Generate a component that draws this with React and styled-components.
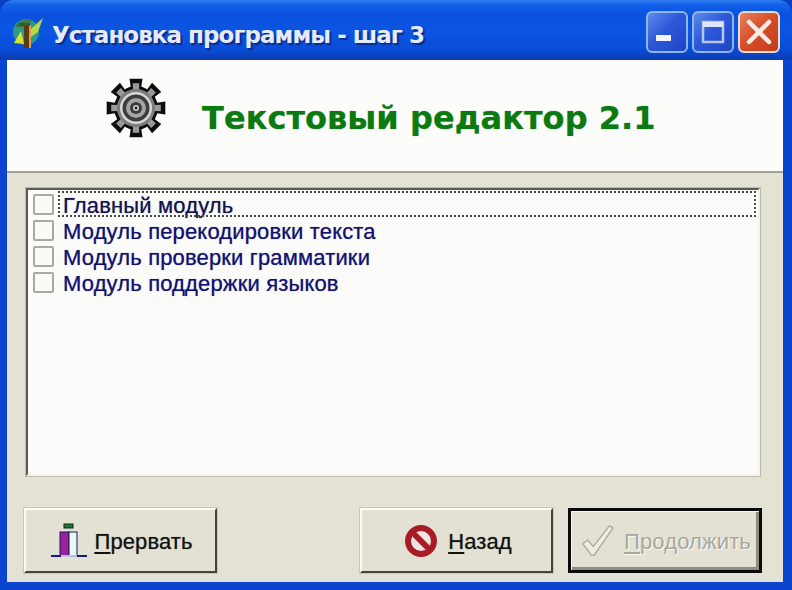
import styled, { createGlobalStyle } from "styled-components";

const GlobalStyle = createGlobalStyle`
  html, body {
    margin: 0;
    padding: 0;
    background: #0a3fc0;
  }
  * {
    box-sizing: border-box;
  }
`;

const Window = styled.div`
  width: 792px;
  height: 590px;
  display: flex;
  flex-direction: column;
  overflow: hidden;
  border-radius: 14px 14px 0 0;
  background: #0b44cf;
  font-family: "Liberation Sans", Arial, sans-serif;
`;

const TitleBar = styled.div`
  height: 60px;
  flex: none;
  display: flex;
  align-items: center;
  padding: 6px 12px 0 11px;
  background: linear-gradient(
    180deg,
    #2f7df0 0,
    #1160e8 5px,
    #0a52de 14px,
    #0b55e2 32px,
    #0a4cd6 50px,
    #0a3cb0 60px
  );
`;

const TitleText = styled.div`
  margin: 3px 0 0 7px;
  font-family: "DejaVu Sans", Verdana, sans-serif;
  font-size: 23px;
  font-weight: 700;
  letter-spacing: -0.95px;
  color: #e4ebfb;
  text-shadow: 2px 2px 1px #0a2c90;
  white-space: nowrap;
`;

const WinButtons = styled.div`
  margin-left: auto;
  display: flex;
  gap: 4px;
  margin-top: -3px;
`;

const WinButton = styled.div`
  width: 42px;
  height: 42px;
  display: flex;
  align-items: center;
  justify-content: center;
  border: 2px solid ${(p) => (p.$close ? "#e8dcd6" : "#8fb4e8")};
  border-radius: 6px;
  background: ${(p) =>
    p.$close
      ? "linear-gradient(135deg, #e8825e, #d8502a 45%, #c23c18)"
      : "linear-gradient(135deg, #5f8cec, #2c58d8 45%, #1e46c4)"};
`;

const Content = styled.div`
  flex: 1;
  margin: 0 9px 8px 7px;
  display: flex;
  flex-direction: column;
  min-height: 0;
  background: #e4e2d5;
`;

const Header = styled.div`
  height: 113px;
  flex: none;
  display: flex;
  align-items: center;
  padding: 0 0 0 99px;
  background: #fcfcfb;
  border-bottom: 2px solid #a3a296;
`;

const GearSlot = styled.div`
  display: flex;
  margin-bottom: 16px;
`;

const Heading = styled.h1`
  margin: 4px 0 0 36px;
  font-family: "DejaVu Sans", Verdana, sans-serif;
  font-size: 32px;
  font-weight: 700;
  letter-spacing: 0.05px;
  color: #0b7a10;
  text-shadow: 0 0 1px rgba(11, 90, 16, 0.5);
  white-space: nowrap;
`;

const Body = styled.div`
  flex: 1;
  display: flex;
  flex-direction: column;
  padding: 15px 21px 9px 17px;
  min-height: 0;
`;

const ListBox = styled.div`
  height: 288px;
  flex: none;
  margin: 0 2px;
  padding: 1px 0 0 0;
  background: #fbfbf9;
  border: 2px solid;
  border-color: #5c5b52 #f4f4ee #f4f4ee #5c5b52;
  box-shadow: 0 0 0 1px #bdbbad;
`;

const Row = styled.div`
  height: 26px;
  display: flex;
  align-items: flex-start;
  gap: 4px;
  padding: 0 2px 0 5px;
`;

const CheckBox = styled.span`
  width: 21px;
  height: 21px;
  flex: none;
  margin-top: 3px;
  background: #fafaf7;
  border: 2px solid #a9a99f;
  border-radius: 2px;
`;

const RowLabel = styled.span`
  flex: 1;
  height: 26px;
  line-height: 30px;
  padding-left: 5px;
  font-size: 22px;
  white-space: nowrap;
  color: ${(p) => (p.$focused ? "#14144a" : "#12126e")};
  outline: ${(p) => (p.$focused ? "2px dotted #4a4a44" : "none")};
  outline-offset: -2px;
  letter-spacing: 0.15px;
  text-shadow: 0 0 1px rgba(18, 18, 110, 0.6);
`;

const Footer = styled.div`
  margin-top: 32px;
  display: flex;
  align-items: center;
`;

const Button = styled.div`
  width: ${(p) => (p.$primary ? "194px" : "193px")};
  height: 65px;
  display: flex;
  align-items: center;
  justify-content: center;
  gap: ${(p) => p.$gap || 10}px;
  margin-left: ${(p) => p.$offset || 0}px;
  padding-left: 3px;
  background: #e3e1d4;
  font-size: 22px;
  line-height: 28px;
  letter-spacing: 0.1px;
  white-space: nowrap;
  color: ${(p) => (p.$disabled ? "#a8a79c" : "#111")};
  text-shadow: ${(p) => (p.$disabled ? "1px 1px 0 #fbfbf6" : "0 0 1px rgba(0, 0, 0, 0.5)")};
  border: ${(p) => (p.$primary ? "3px solid #0a0a0a" : "2px solid")};
  border-color: ${(p) =>
    p.$primary ? "#0a0a0a" : "#fbfbf6 #45443c #45443c #fbfbf6"};
  box-shadow: ${(p) =>
    p.$primary
      ? "inset 1px 1px 0 #fbfbf6, inset -3px -3px 0 #8d8c80"
      : "0 0 0 1px #c9c7b8"};

  span {
    margin-top: 3px;
  }

  u {
    text-underline-offset: 3px;
  }
`;

const gearPoints = (inner, outer, spread) => {
  const pts = [];
  const teeth = 8;
  for (let i = 0; i < teeth; i++) {
    const a = (i / teeth) * Math.PI * 2 - Math.PI / 2;
    const step = Math.PI / teeth;
    [
      [a - step * (spread + 0.06), inner],
      [a - step * spread, outer],
      [a + step * spread, outer],
      [a + step * (spread + 0.06), inner],
    ].forEach(([t, r]) => {
      pts.push(`${(30 + r * Math.cos(t)).toFixed(1)},${(30 + r * Math.sin(t)).toFixed(1)}`);
    });
  }
  return pts.join(" ");
};

function GearIcon() {
  return (
    <svg width="60" height="60" viewBox="0 0 60 60">
      <polygon points={gearPoints(22, 30, 0.56)} fill="#0c0c0c" />
      <polygon points={gearPoints(19, 25, 0.34)} fill="#9a9a9a" />
      <circle cx="30" cy="30" r="19" fill="#7e7e7e" />
      <circle cx="30" cy="30" r="16" fill="#d8d8d8" />
      <circle cx="30" cy="30" r="13.5" fill="#3c3c3c" />
      <circle cx="30" cy="30" r="10" fill="#a4a4a4" />
      <circle cx="30" cy="30" r="6" fill="#3a3a3a" />
      <circle cx="30" cy="30" r="3" fill="#c8c8c8" />
      <circle cx="30" cy="30" r="1.3" fill="#111" />
    </svg>
  );
}

function AppIcon() {
  return (
    <svg width="34" height="36" viewBox="0 0 34 36">
      <circle cx="15" cy="17" r="13" fill="#2a9a8a" />
      <path d="M4 12 Q10 2 22 5 L14 12 Z" fill="#3a7a50" />
      <path d="M3 28 L10 16 L13 29 Z" fill="#d8e030" />
      <path d="M20 14 L32 3 L27 17 L20 22 Z" fill="#b8d848" />
      <rect x="13" y="9" width="5" height="24" fill="#5a3a18" />
      <rect x="18" y="10" width="2" height="23" fill="#e0a040" />
      <rect x="8" y="8" width="11" height="3" fill="#3a5a20" />
    </svg>
  );
}

function DoorIcon() {
  return (
    <svg width="36" height="36" viewBox="0 0 36 36">
      <rect x="13" y="1" width="9" height="4" fill="#1f7a3a" stroke="#0c2a18" strokeWidth="1" />
      <rect x="9" y="9" width="9" height="24" fill="#9a1ea0" stroke="#1a1a50" strokeWidth="1" />
      <rect x="18" y="9" width="8" height="24" fill="#eaf8f8" stroke="#1a1a50" strokeWidth="1" />
      <path d="M0 33 H10 M26 33 H36" stroke="#1a1a80" strokeWidth="2" />
      <path d="M10 33 H26" stroke="#bcbcd8" strokeWidth="2" />
    </svg>
  );
}

function StopIcon() {
  return (
    <svg width="34" height="34" viewBox="0 0 34 34">
      <circle cx="17" cy="17" r="13" fill="#efe6e2" stroke="#a81c28" strokeWidth="6" />
      <path d="M7 7 L27 27" stroke="#a81c28" strokeWidth="6" />
    </svg>
  );
}

function CheckIcon() {
  return (
    <svg width="32" height="32" viewBox="0 0 34 34">
      <path
        d="M1 20 L6 16 L12 23 L29 1 L33 3 L13 32 L10 32 Z"
        fill="#eeede4"
        stroke="#a8a79c"
        strokeWidth="1.4"
        strokeLinejoin="round"
      />
    </svg>
  );
}

const modules = [
  "Главный модуль",
  "Модуль перекодировки текста",
  "Модуль проверки грамматики",
  "Модуль поддержки языков",
];

export default function App() {
  return (
    <>
      <GlobalStyle />
      <Window>
        <TitleBar>
          <AppIcon />
          <TitleText>Установка программы - шаг 3</TitleText>
          <WinButtons>
            <WinButton>
              <svg width="24" height="24" viewBox="0 0 24 24">
                <rect x="1" y="15" width="15" height="6" fill="#f2f4fa" />
              </svg>
            </WinButton>
            <WinButton>
              <svg width="24" height="24" viewBox="0 0 24 24">
                <rect x="2" y="2" width="20" height="20" fill="none" stroke="#b4c8ee" strokeWidth="2.5" />
                <rect x="2" y="2" width="20" height="5" fill="#dde6f6" />
              </svg>
            </WinButton>
            <WinButton $close>
              <svg width="28" height="28" viewBox="0 0 28 28">
                <path d="M4 4 L24 24 M24 4 L4 24" stroke="#f8ece4" strokeWidth="4.5" strokeLinecap="round" />
              </svg>
            </WinButton>
          </WinButtons>
        </TitleBar>
        <Content>
          <Header>
            <GearSlot>
              <GearIcon />
            </GearSlot>
            <Heading>Текстовый редактор 2.1</Heading>
          </Header>
          <Body>
            <ListBox>
              {modules.map((name, i) => (
                <Row key={name}>
                  <CheckBox />
                  <RowLabel $focused={i === 0}>{name}</RowLabel>
                </Row>
              ))}
            </ListBox>
            <Footer>
              <Button $gap={7}>
                <DoorIcon />
                <span>
                  <u>П</u>рервать
                </span>
              </Button>
              <Button $offset={143}>
                <StopIcon />
                <span>
                  <u>Н</u>азад
                </span>
              </Button>
              <Button $offset={15} $primary $disabled>
                <CheckIcon />
                <span>
                  <u>П</u>родолжить
                </span>
              </Button>
            </Footer>
          </Body>
        </Content>
      </Window>
    </>
  );
}
